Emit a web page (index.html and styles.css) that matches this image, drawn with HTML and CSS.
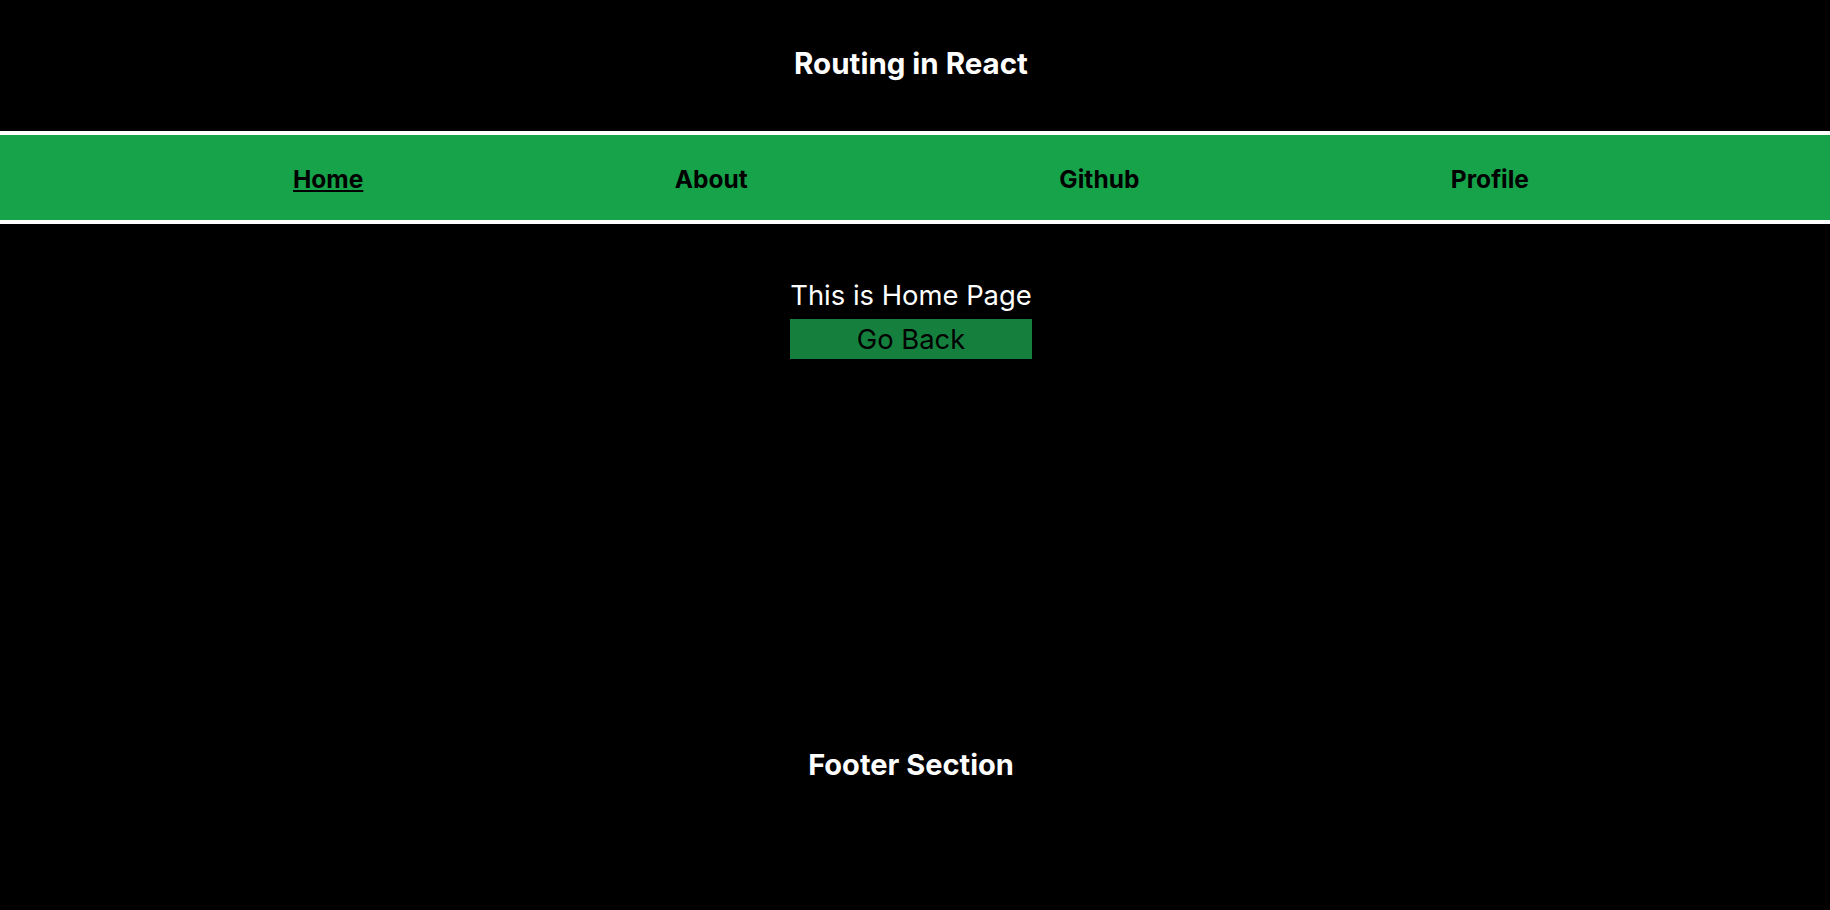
FILE: index.html
```html
<!DOCTYPE html>
<html lang="en">
<head>
<meta charset="utf-8">
<title>Routing in React</title>
<link rel="stylesheet" href="styles.css">
</head>
<body>
<div class="app">
  <header class="header">
    <h1 class="title">Routing in React</h1>
  </header>
  <nav class="nav">
    <a class="nav-link active" href="#">Home</a>
    <a class="nav-link" href="#">About</a>
    <a class="nav-link" href="#">Github</a>
    <a class="nav-link" href="#">Profile</a>
  </nav>
  <main class="main">
    <div class="home">
      <p class="home-text">This is Home Page</p>
      <button class="back-btn">Go Back</button>
    </div>
  </main>
  <footer class="footer">
    <h2 class="footer-title">Footer Section</h2>
  </footer>
</div>
</body>
</html>
```

FILE: styles.css
```css
* { box-sizing: border-box; }
html, body { margin: 0; padding: 0; background: #000; }
body { font-family: "Inter", "Open Sans", sans-serif; color: #fff; }
.app { display: flex; flex-direction: column; min-height: 910px; }
.header { padding: 43px 8px 48px 0; display: flex; justify-content: center; }
.title { margin: 0; font-size: 29.5px; line-height: 40px; font-weight: 700; }
.nav {
  background: #16a34a;
  border-top: 4px solid #fff;
  border-bottom: 4px solid #fff;
  display: flex;
  justify-content: space-between;
  padding: 27px 301px 24px 293px;
}
.nav-link { color: #000; font-weight: 700; font-size: 24.5px; line-height: 34px; text-decoration: none; }
.nav-link.active { text-decoration: underline; text-decoration-thickness: 2px; text-underline-offset: 2px; }
.main { flex: 1; display: flex; justify-content: center; padding: 51px 8px 0 0; }
.home { display: flex; flex-direction: column; align-items: stretch; }
.home-text { margin: 0; font-size: 27.4px; line-height: 40px; }
.back-btn { margin-top: 4px; border: 0; background: #15803d; color: #000; font-family: inherit; font-size: 27.4px; line-height: 40px; padding: 0; }
.footer { display: flex; justify-content: center; padding: 0 8px 125px 0; }
.footer-title { margin: 0; font-size: 29px; line-height: 40px; font-weight: 700; }
```
